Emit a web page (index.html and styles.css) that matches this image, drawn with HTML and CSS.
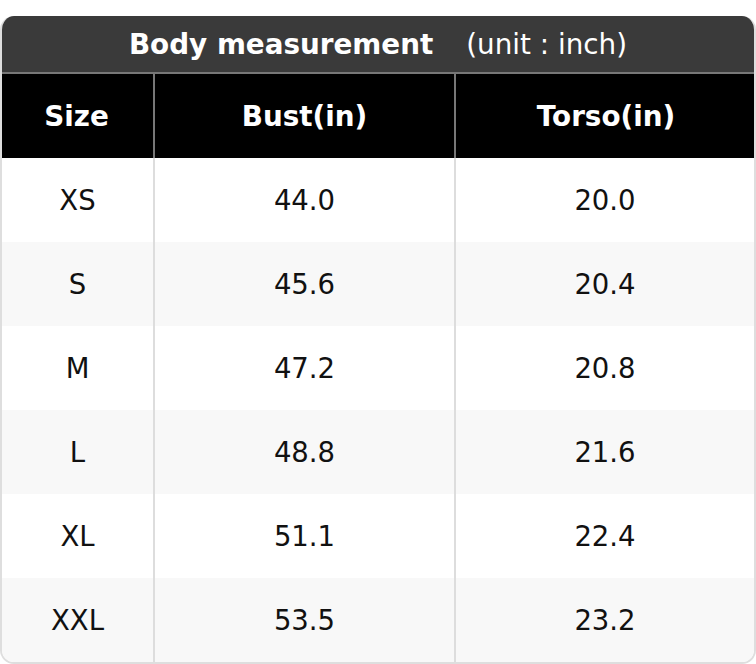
FILE: index.html
```html
<!DOCTYPE html>
<html>
<head>
<meta charset="utf-8">
<link rel="stylesheet" href="styles.css">
</head>
<body>
<div class="chart">
  <div class="title"><b>Body measurement</b><span class="unit">(unit : inch)</span></div>
  <div class="row head">
    <div class="cell">Size</div>
    <div class="cell">Bust(in)</div>
    <div class="cell">Torso(in)</div>
  </div>
  <div class="row"><div class="cell">XS</div><div class="cell">44.0</div><div class="cell">20.0</div></div>
  <div class="row alt"><div class="cell">S</div><div class="cell">45.6</div><div class="cell">20.4</div></div>
  <div class="row"><div class="cell">M</div><div class="cell">47.2</div><div class="cell">20.8</div></div>
  <div class="row alt"><div class="cell">L</div><div class="cell">48.8</div><div class="cell">21.6</div></div>
  <div class="row"><div class="cell">XL</div><div class="cell">51.1</div><div class="cell">22.4</div></div>
  <div class="row alt"><div class="cell">XXL</div><div class="cell">53.5</div><div class="cell">23.2</div></div>
</div>
</body>
</html>
```
FILE: styles.css
```css
html, body {
  margin: 0;
  padding: 0;
  background: #ffffff;
}
body {
  padding-top: 16px;
  font-family: "DejaVu Sans", sans-serif;
  font-size: 27.5px;
  color: #111;
}
.chart {
  width: 756px;
  box-sizing: border-box;
  border: 2px solid #dedede;
  border-top: none;
  border-radius: 14px;
  overflow: hidden;
}
.title {
  height: 56px;
  background: #3a3a3a;
  color: #fff;
  display: flex;
  align-items: center;
  justify-content: center;
  border-bottom: 2px solid #777;
  margin: 0 -2px;
  font-size: 27.8px;
}
.title b {
  font-weight: bold;
}
.unit {
  margin-left: 33px;
  font-weight: normal;
}
.row {
  display: grid;
  grid-template-columns: 153px 301px 1fr;
  height: 84px;
  background: #fff;
}
.row.alt {
  background: #f8f8f8;
}
.cell {
  display: flex;
  align-items: center;
  justify-content: center;
  border-right: 2px solid #dddddd;
}
.cell:last-child {
  border-right: none;
}
.head {
  background: #000;
  color: #fff;
  font-weight: bold;
  margin: 0 -2px;
  grid-template-columns: 155px 301px 1fr;
  font-size: 27.8px;
}
.head .cell {
  border-right-color: #777;
}
```
